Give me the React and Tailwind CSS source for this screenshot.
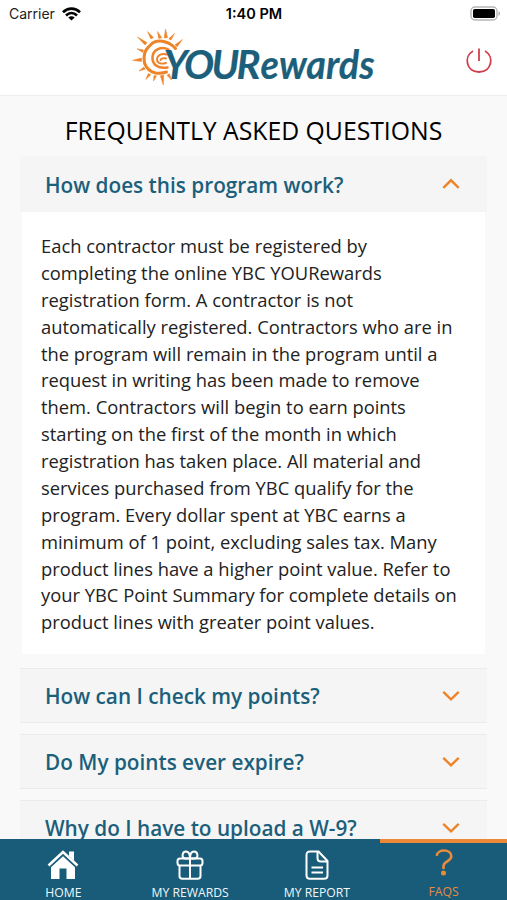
import { useState } from "react";

const faqs = [
  {
    question: "How does this program work?",
    answer:
      "Each contractor must be registered by completing the online YBC YOURewards registration form. A contractor is not automatically registered. Contractors who are in the program will remain in the program until a request in writing has been made to remove them. Contractors will begin to earn points starting on the first of the month in which registration has taken place. All material and services purchased from YBC qualify for the program. Every dollar spent at YBC earns a minimum of 1 point, excluding sales tax. Many product lines have a higher point value. Refer to your YBC Point Summary for complete details on product lines with greater point values.",
  },
  { question: "How can I check my points?" },
  { question: "Do My points ever expire?" },
  { question: "Why do I have to upload a W-9?" },
];

function StatusBar() {
  return (
    <div className="grid h-[27px] grid-cols-3 items-center pl-[9px] pr-[6px] font-['Inter','Liberation_Sans',sans-serif] text-[14px] text-[#222]">
      <div className="flex items-center gap-[7px]">
        <span>Carrier</span>
        <svg width="19" height="14" viewBox="0 0 19 14" fill="none" stroke="#000" strokeWidth="2.7">
          <path d="M1 5.2C6 .3 13 .3 18 5.2" />
          <path d="M4 8.4c3.3-3.1 7.7-3.1 11 0" />
          <path d="M9.5 13.5 6.3 10.4c1.9-1.7 4.5-1.7 6.4 0Z" fill="#000" stroke="none" />
        </svg>
      </div>
      <div className="-ml-[2px] whitespace-nowrap text-center text-[14.500px] font-semibold text-black">1:40 PM</div>
      <div className="flex justify-end">
        <svg width="31" height="15" viewBox="0 0 31 15">
          <rect x="1" y="1" width="26" height="13" rx="4" fill="#fff" stroke="#b5b5b5" strokeWidth="1.4" />
          <rect x="3" y="3" width="22" height="9" rx="1.8" fill="#000" />
          <path d="M28.5 5.2c2 .6 2 4 0 4.6Z" fill="#aaa" />
        </svg>
      </div>
    </div>
  );
}

function Logo() {
  return (
    <svg width="266" height="60" viewBox="121 28 266 60" role="img" aria-label="YOURewards">
      <g fill="none" stroke="#ee8429" strokeLinecap="round" strokeLinejoin="round">
        <path d="M175.500 49.500C169 42 160 41 154.500 43c-3 1-3.500 3-6 5-4 3.500-5 10-4 16 2 6 7 9 11 10 4 .5 7 .5 11-1" strokeWidth="3" />
        <path d="M168.500 50.500C161 46.500 153 51 152.500 58c-.5 7 5 12 15 10.500" strokeWidth="2.500" />
        <path d="M167 55.500c-5-1.500-9.500.5-10 4.500-.3 4 4 5.500 9 4M166 59.500c-2-.8-5 0-5.500 1.500" strokeWidth="1.900" />
      </g>
      <g fill="#ee8429" stroke="#ee8429" strokeWidth="0.5" strokeLinejoin="round">
        <path d="m137.500 38 9.500 5.500-2 2.500Z" />
        <path d="m147.500 32.500 6 6-2.700 1.500Z" />
        <path d="m157.500 32.500 4.300 6.200-3.200.7Z" />
        <path d="m165.500 30 2 8.800-3.300.1Z" />
        <path d="m174.500 34.500-3.500 6.500-2.300-1.200Z" />
        <path d="m182.500 40.500-5.300 7.300-2.200-2Z" />
        <path d="m137 49.800 6.500 1.200-.8 2.400Z" />
        <path d="m132.500 61.300 9-2.200v3.500Z" />
        <path d="m139 72 4.800-4 1.500 2.200Z" />
        <path d="m145.800 80.500 2.500-6 2.500 1.200Z" />
        <path d="m153.500 82 .5-5.500 2.500.4Z" />
        <path d="m163.300 86-3-9.300 3.500-.4Z" />
        <path d="m171.500 81-4.500-4.800 2.400-1.500Z" />
      </g>
      <g fill="#1c5f7b" stroke="#1c5f7b" className="font-['Lato',sans-serif] font-bold italic">
        <text x="163.500" y="80" fontSize="40" strokeWidth="0.2" textLength="97" lengthAdjust="spacing">YOUR</text>
        <text x="260.500" y="80" fontSize="39.5" strokeWidth="0.2" textLength="114" lengthAdjust="spacingAndGlyphs">ewards</text>
      </g>
    </svg>
  );
}

function Header() {
  return (
    <header className="grid h-[69px] grid-cols-[1fr_266px_1fr] items-start border-b border-[#eee] pb-2">
      <span />
      <Logo />
      <button className="mr-[14px] mt-[20px] justify-self-end" aria-label="Log out">
        <svg width="28" height="28" viewBox="0 0 28 28" fill="none" stroke="#d0404c" strokeWidth="1.8">
          <path d="M14 1.500V14M8 4C-1.500 9.500 1 25 14 25S29.500 9.500 20 4" />
        </svg>
      </button>
    </header>
  );
}

function Chevron({ open }) {
  return (
    <svg width="18" height="12" viewBox="0 0 18 12" fill="none" stroke="#ee8429" strokeWidth="2.400">
      <path d={open ? "m1.300 9.800 7.700-7.500 7.700 7.500" : "m1.300 1.800 7.700 7.500 7.700-7.500"} />
    </svg>
  );
}

function FaqItem({ faq, open, onToggle }) {
  return (
    <section>
      <button
        onClick={onToggle}
        className={`flex w-full items-center justify-between border-y bg-[#f5f5f5] pl-[25px] pr-[27px] text-left text-[20.750px] font-semibold text-[#1c5f7b] ${
          open ? "h-[56px] border-[#f5f5f5]" : "h-[55px] border-[#ebebeb]"
        }`}
      >
        <span className={`whitespace-nowrap ${open ? "pt-[4px]" : "pt-[2px]"}`}>{faq.question}</span>
        <Chevron open={open} />
      </button>
      {open && (
        <div className="mx-[2px] mb-[3px] bg-white pb-[18px] pl-[19px] pr-[25px] pt-[21px] text-[18.350px] leading-[26.870px] text-[#222]">
          {faq.answer}
        </div>
      )}
    </section>
  );
}

function HomeIcon() {
  return (
    <svg width="32" height="30" viewBox="0 0 32 30" fill="#fff">
      <path d="M22 1.500h5v9l-5-4.500Z" />
      <path d="M1.500 15.500 16 2l14.500 13.500" fill="none" stroke="#fff" strokeWidth="2.500" />
      <path d="M16 6.300 4 17.300V29h8.500V18.500h7V29H28V17.300Z" />
    </svg>
  );
}

function GiftIcon() {
  return (
    <svg width="28" height="30" viewBox="0 0 28 30" fill="none" stroke="#fff" strokeWidth="2">
      <rect x="1.500" y="8.500" width="25" height="7" rx="2.500" />
      <path d="M3.500 15.500V26q0 2.800 2.800 2.800h15.400q2.800 0 2.800-2.800V15.500M14 8.500v20" />
      <path d="M14 8.500H9.500C5 8.500 6 1.500 10 1.500c3.500 0 4 4 4 7 0-3 .5-7 4-7 4 0 5 7 .5 7Z" />
    </svg>
  );
}

function ReportIcon() {
  return (
    <svg width="24" height="30" viewBox="0 0 24 30" fill="none" stroke="#fff" strokeWidth="2" strokeLinejoin="round">
      <path d="M5 1.500h8.500l9 9.500v14.500q0 3.300-3.300 3.300H4.800q-3.300 0-3.300-3.300V5Q1.500 1.500 5 1.500Z" />
      <path d="M12.500 1.500V8q0 3.500 3.500 3.500h6.500M6.500 17.500h11.500M6.500 22.500h11.500" />
    </svg>
  );
}

function HelpIcon() {
  return (
    <svg width="18" height="27" viewBox="0 0 18 27" fill="none" stroke="#e78c3c" strokeWidth="2.600">
      <path d="M1.700 6.800C2.500-.5 16.300-.3 16.300 7.300c0 5.500-7.800 4.700-7.800 9.700v3" />
      <circle cx="8.500" cy="24" r="2.500" fill="#e78c3c" stroke="none" />
    </svg>
  );
}

const tabs = [
  { label: "HOME", Icon: HomeIcon },
  { label: "MY REWARDS", Icon: GiftIcon },
  { label: "MY REPORT", Icon: ReportIcon },
  { label: "FAQS", Icon: HelpIcon, active: true },
];

function TabBar() {
  return (
    <nav className="grid h-[61px] shrink-0 grid-cols-4 bg-[#185c79] text-[12.200px] leading-[16px]">
      {tabs.map(({ label, Icon, active }) => (
        <button
          key={label}
          className={`flex flex-col items-center border-t-4 ${
            active ? "border-[#ec8937] text-[#e78c3c]" : "border-[#185c79] text-[#f1f7fa]"
          }`}
        >
          <span className={`flex h-[30px] items-start ${active ? "mt-[6px]" : "mt-[7px]"}`}>
            <Icon />
          </span>
          <span className="mt-[5px] whitespace-nowrap">{label}</span>
        </button>
      ))}
    </nav>
  );
}

export default function App() {
  const [openIndex, setOpenIndex] = useState(0);

  return (
    <div className="flex h-screen flex-col overflow-hidden bg-white font-['Open_Sans',sans-serif]">
      <StatusBar />
      <Header />
      <main className="min-h-0 flex-1 overflow-hidden bg-[#f9f9f9] px-5 pt-[17px]">
        <h1 className="mb-[7px] text-center text-[24.750px] leading-[36px] text-black">
          FREQUENTLY ASKED QUESTIONS
        </h1>
        <div className="flex flex-col gap-[11px]">
          {faqs.map((faq, i) => (
            <FaqItem
              key={faq.question}
              faq={faq}
              open={openIndex === i}
              onToggle={() => setOpenIndex(openIndex === i ? -1 : i)}
            />
          ))}
        </div>
      </main>
      <TabBar />
    </div>
  );
}
